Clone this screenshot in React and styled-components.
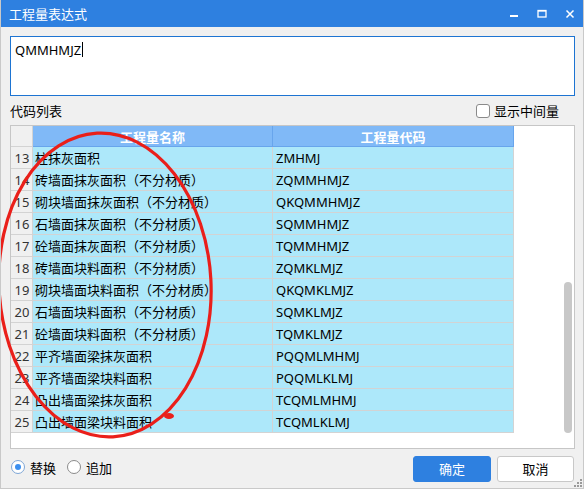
import styled, { createGlobalStyle } from "styled-components";

const GlobalStyle = createGlobalStyle`
  html, body {
    margin: 0;
    padding: 0;
    background: #ffffff;
  }
  * {
    box-sizing: border-box;
  }
`;

const rows = [
  { no: 13, name: "柱抹灰面积", code: "ZMHMJ" },
  { no: 14, name: "砖墙面抹灰面积（不分材质）", code: "ZQMMHMJZ" },
  { no: 15, name: "砌块墙面抹灰面积（不分材质）", code: "QKQMMHMJZ" },
  { no: 16, name: "石墙面抹灰面积（不分材质）", code: "SQMMHMJZ" },
  { no: 17, name: "砼墙面抹灰面积（不分材质）", code: "TQMMHMJZ" },
  { no: 18, name: "砖墙面块料面积（不分材质）", code: "ZQMKLMJZ" },
  { no: 19, name: "砌块墙面块料面积（不分材质）", code: "QKQMKLMJZ" },
  { no: 20, name: "石墙面块料面积（不分材质）", code: "SQMKLMJZ" },
  { no: 21, name: "砼墙面块料面积（不分材质）", code: "TQMKLMJZ" },
  { no: 22, name: "平齐墙面梁抹灰面积", code: "PQQMLMHMJ" },
  { no: 23, name: "平齐墙面梁块料面积", code: "PQQMLKLMJ" },
  { no: 24, name: "凸出墙面梁抹灰面积", code: "TCQMLMHMJ" },
  { no: 25, name: "凸出墙面梁块料面积", code: "TCQMLKLMJ" },
];

const Window = styled.div`
  position: relative;
  width: 584px;
  height: 489px;
  display: flex;
  flex-direction: column;
  background: #f0f0f0;
  border-left: 1px solid #c9c9c9;
  border-right: 1px solid #c9c9c9;
  border-bottom: 1px solid #c9c9c9;
  font-family: "Noto Sans", "Noto Sans CJK SC", sans-serif;
  font-size: 13px;
  color: #000;
  overflow: hidden;
`;

const TitleBar = styled.div`
  height: 27px;
  margin: 0 -1px;
  display: flex;
  align-items: center;
  background: #2e80e0;
  color: #fff;
  padding-left: 9px;
`;

const Title = styled.div`
  flex: 1;
  font-size: 13px;
`;

const Controls = styled.div`
  display: flex;
  height: 100%;
`;

const ControlButton = styled.div`
  width: 28px;
  height: 100%;
  display: flex;
  align-items: center;
  justify-content: center;
`;

const Body = styled.div`
  flex: 1;
  display: flex;
  flex-direction: column;
  padding: 9px 8px 0 9px;
`;

const ExpressionBox = styled.div`
  height: 60px;
  background: #fff;
  border: 1px solid #1d74d2;
  padding: 3px 4px;
  line-height: 20px;
  font-size: 13px;
  display: flex;
  align-items: flex-start;
`;

const Caret = styled.span`
  display: inline-block;
  width: 1px;
  height: 15px;
  margin-top: 2px;
  margin-left: 1px;
  background: #000;
`;

const LabelRow = styled.div`
  height: 29px;
  display: flex;
  align-items: center;
  justify-content: space-between;
  padding-right: 16px;
`;

const CheckLabel = styled.label`
  display: flex;
  align-items: center;
  gap: 4px;
`;

const CheckBox = styled.span`
  width: 14px;
  height: 14px;
  border: 1px solid #8a8a8a;
  border-radius: 3px;
  background: #fff;
`;

const Grid = styled.div`
  height: 324px;
  border: 1px solid #c6c6c6;
  background: #fff;
  display: flex;
`;

const Table = styled.div`
  width: 503px;
  display: flex;
  flex-direction: column;
`;

const Row = styled.div`
  display: grid;
  grid-template-columns: 22px 240px 241px;
  height: ${({ $header }) => ($header ? "21px" : "22px")};
`;

const Cell = styled.div`
  display: flex;
  align-items: center;
  white-space: nowrap;
  overflow: hidden;
  padding: 0 ${({ $pad }) => $pad || 2}px;
  border-right: 1px solid #d3d3d3;
  border-bottom: 1px solid #d3d3d3;
  background: #ade8fa;
`;

const RowHead = styled(Cell)`
  justify-content: center;
  padding: 0 0 0 1px;
  background: #f0f0f0;
  color: #333;
`;

const HeadCell = styled(Cell)`
  justify-content: center;
  background: #80b9f7;
  color: #fff;
  font-weight: bold;
  border-right-color: #68a5ec;
  border-bottom-color: #68a5ec;
`;

const Corner = styled(Cell)`
  background: #f0f0f0;
`;

const ScrollTrack = styled.div`
  flex: 1;
  display: flex;
  justify-content: flex-end;
  padding-right: 2px;
`;

const ScrollThumb = styled.div`
  width: 8px;
  height: 151px;
  margin-top: 156px;
  border-radius: 4px;
  background: #c8c8c8;
`;

const Footer = styled.div`
  flex: 1;
  display: flex;
  align-items: center;
  justify-content: space-between;
  padding-right: 1px;
`;

const RadioGroup = styled.div`
  display: flex;
  align-items: center;
  gap: 11px;
  margin-top: -3px;
  padding-left: 1px;
`;

const RadioLabel = styled.label`
  display: flex;
  align-items: center;
  gap: 5px;
`;

const RadioDot = styled.span`
  width: 14px;
  height: 14px;
  border-radius: 50%;
  background: #fff;
  border: 1px solid ${({ $checked }) => ($checked ? "#7ea6d6" : "#8a8a8a")};
  display: flex;
  align-items: center;
  justify-content: center;
  &::after {
    content: "";
    width: 6px;
    height: 6px;
    border-radius: 50%;
    background: ${({ $checked }) => ($checked ? "#3b8ff0" : "transparent")};
  }
`;

const Buttons = styled.div`
  display: flex;
  gap: 6px;
`;

const Button = styled.button`
  width: ${({ $w }) => $w}px;
  height: 26px;
  border-radius: 3px;
  font-family: inherit;
  font-size: 13px;
  border: 1px solid ${({ $primary }) => ($primary ? "#2e80e0" : "#c8c8c8")};
  background: ${({ $primary }) => ($primary ? "#2e80e0" : "#fff")};
  color: ${({ $primary }) => ($primary ? "#fff" : "#000")};
  padding: 0;
`;

const Annotation = styled.svg`
  position: absolute;
  left: -1px;
  top: 0;
  pointer-events: none;
`;

const Grip = styled.svg`
  position: absolute;
  right: 0;
  bottom: 0;
`;

export default function App() {
  return (
    <>
      <GlobalStyle />
      <Window>
        <TitleBar>
          <Title>工程量表达式</Title>
          <Controls>
            <ControlButton>
              <svg width="10" height="10" viewBox="0 0 10 10">
                <rect x="1" y="6" width="8" height="2" fill="#fff" />
              </svg>
            </ControlButton>
            <ControlButton>
              <svg width="10" height="10" viewBox="0 0 10 10">
                <rect x="1" y="1.5" width="8" height="6.5" fill="none" stroke="#fff" strokeWidth="1.3" />
                <rect x="1" y="1" width="8" height="1.6" fill="#fff" />
              </svg>
            </ControlButton>
            <ControlButton>
              <svg width="10" height="10" viewBox="0 0 10 10">
                <path d="M1.5 1.5 L8.5 8.5 M8.5 1.5 L1.5 8.5" stroke="#fff" strokeWidth="1.5" />
              </svg>
            </ControlButton>
          </Controls>
        </TitleBar>

        <Body>
          <ExpressionBox>
            QMMHMJZ
            <Caret />
          </ExpressionBox>

          <LabelRow>
            <span>代码列表</span>
            <CheckLabel>
              <CheckBox />
              显示中间量
            </CheckLabel>
          </LabelRow>

          <Grid>
            <Table>
              <Row $header>
                <Corner />
                <HeadCell>工程量名称</HeadCell>
                <HeadCell>工程量代码</HeadCell>
              </Row>
              {rows.map((r) => (
                <Row key={r.no}>
                  <RowHead>{r.no}</RowHead>
                  <Cell>{r.name}</Cell>
                  <Cell $pad={3}>{r.code}</Cell>
                </Row>
              ))}
            </Table>
            <ScrollTrack>
              <ScrollThumb />
            </ScrollTrack>
          </Grid>

          <Footer>
            <RadioGroup>
              <RadioLabel>
                <RadioDot $checked />
                替换
              </RadioLabel>
              <RadioLabel>
                <RadioDot />
                追加
              </RadioLabel>
            </RadioGroup>
            <Buttons>
              <Button $primary $w={78}>确定</Button>
              <Button $w={77}>取消</Button>
            </Buttons>
          </Footer>
        </Body>

        <Annotation width="584" height="489" viewBox="0 0 584 489">
          <ellipse
            cx="105"
            cy="285"
            rx="106"
            ry="152"
            transform="rotate(-3 105 285)"
            fill="none"
            stroke="#ea1f1a"
            strokeWidth="3.2"
          />
          <ellipse cx="169" cy="416" rx="5" ry="3" fill="#ea1f1a" />
        </Annotation>

        <Grip width="10" height="10" viewBox="0 0 10 10">
          <g fill="#9a9a9a">
            <rect x="7" y="1" width="2" height="2" />
            <rect x="4" y="4" width="2" height="2" />
            <rect x="7" y="4" width="2" height="2" />
            <rect x="1" y="7" width="2" height="2" />
            <rect x="4" y="7" width="2" height="2" />
            <rect x="7" y="7" width="2" height="2" />
          </g>
        </Grip>
      </Window>
    </>
  );
}
